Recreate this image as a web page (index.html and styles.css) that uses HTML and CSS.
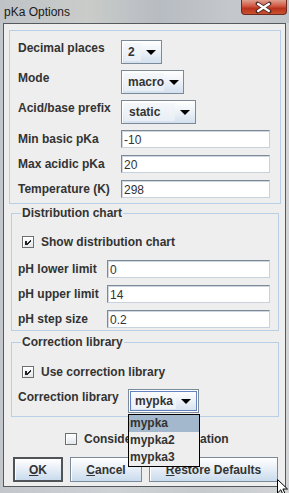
FILE: index.html
```html
<!DOCTYPE html>
<html lang="en">
<head>
  <meta charset="UTF-8" />
  <title>pKa Options</title>
  <link rel="stylesheet" href="styles.css">
</head>
<body>
  <div class="titlebar">
    <span class="title">pKa Options</span>
    <div class="close-btn">
      <svg width="46" height="15" viewBox="0 0 46 15">
        <path d="M17 3.5 L29 11.5 M29 3.5 L17 11.5" stroke="#4a2a26" stroke-width="4.2" stroke-linecap="round" />
        <path d="M17.5 4 L28.5 11 M28.5 4 L17.5 11" stroke="#fff" stroke-width="2.4" stroke-linecap="round" />
      </svg>
    </div>
  </div>

  <div class="window">
    <div class="group main">
      <span class="label up">Decimal places</span>
      <div class="combo w-dec"><span class="combo-text">2</span><span class="arrow"></span></div>

      <span class="label up">Mode</span>
      <div class="combo w-mode"><span class="combo-text">macro</span><span class="arrow"></span></div>

      <span class="label up">Acid/base prefix</span>
      <div class="combo w-prefix"><span class="combo-text">static</span><span class="arrow"></span></div>

      <span class="label">Min basic pKa</span>
      <div class="field">-10</div>

      <span class="label">Max acidic pKa</span>
      <div class="field">20</div>

      <span class="label">Temperature (K)</span>
      <div class="field">298</div>
    </div>

    <fieldset class="group titled dist">
      <legend>Distribution chart</legend>
      <label class="check-row">
        <span class="checkbox checked">
          <svg width="10" height="10" viewBox="0 0 10 10" shape-rendering="crispEdges">
            <rect x="2" y="4" width="2" height="4" fill="#222" />
            <path d="M4 7 L8 3 M4 8 L8 4" stroke="#222" stroke-width="1" />
          </svg>
        </span>
        Show distribution chart
      </label>
      <div class="form-grid ph">
        <span class="label">pH lower limit</span>
        <div class="field">0</div>
        <span class="label">pH upper limit</span>
        <div class="field">14</div>
        <span class="label">pH step size</span>
        <div class="field">0.2</div>
      </div>
    </fieldset>

    <fieldset class="group titled corr">
      <legend>Correction library</legend>
      <label class="check-row">
        <span class="checkbox checked">
          <svg width="10" height="10" viewBox="0 0 10 10" shape-rendering="crispEdges">
            <rect x="2" y="4" width="2" height="4" fill="#222" />
            <path d="M4 7 L8 3 M4 8 L8 4" stroke="#222" stroke-width="1" />
          </svg>
        </span>
        Use correction library
      </label>
      <div class="lib-row">
        <span class="label up">Correction library</span>
        <div class="combo w-lib focused">
          <span class="combo-text">mypka</span><span class="arrow"></span>
          <ul class="popup">
            <li class="selected">mypka</li>
            <li>mypka2</li>
            <li>mypka3</li>
          </ul>
        </div>
      </div>
    </fieldset>

    <label class="check-row consider">
      <span class="checkbox"></span>
      Consider tautomerization
    </label>

    <div class="buttons">
      <button class="btn default w-ok"><u>O</u>K</button>
      <button class="btn w-cancel"><u>C</u>ancel</button>
      <button class="btn w-restore"><u>R</u>estore Defaults</button>
    </div>
  </div>

  <svg class="cursor" width="12" height="16" viewBox="0 0 12 16">
    <path d="M0.5 0.5 L0.5 14 L3.8 10.8 L6 15.5 L8 14.6 L5.9 10 L10.5 10 Z" fill="#fff" stroke="#000" stroke-width="1" />
  </svg>
</body>
</html>
```

FILE: styles.css
```css
* {
  box-sizing: border-box;
}

body {
  margin: 0;
  width: 289px;
  height: 493px;
  overflow: hidden;
  position: relative;
  background: linear-gradient(90deg, #c3c7cb 0%, #cfd2d5 40%, #c6cacd 70%, #d2d4d6 100%);
  font-family: "Liberation Sans", Arial, sans-serif;
  font-size: 12px;
  color: #333;
}

.titlebar {
  height: 23px;
  display: flex;
  align-items: flex-start;
  background: linear-gradient(90deg, #bfc3c7 0%, #c9ccc9 30%, #b7bcc2 55%, #c4c8cc 80%, #bfc4c9 100%);
}

.title {
  padding: 5px 0 0 4px;
  font-size: 12px;
  color: #1a1a1a;
}

.close-btn {
  margin-left: auto;
  margin-right: 2px;
  width: 46px;
  height: 15px;
  border: 1px solid #6e2a20;
  border-top: none;
  border-radius: 0 0 4px 4px;
  background: linear-gradient(#e0a090 0%, #d0553e 45%, #b8321e 60%, #c9522e 100%);
  display: flex;
  align-items: center;
  justify-content: center;
  overflow: hidden;
}

.close-btn svg {
  margin-left: -1px;
}

.window {
  margin: 0 3px;
  height: 464px;
  border: 1px solid #555a5f;
  background: #eeeeee;
  display: flex;
  flex-direction: column;
}

.group {
  border: 1px solid #b8cfe5;
}

.main {
  margin: 6px 4px 0 5px;
  padding: 9px 0 4px 8px;
  display: grid;
  grid-template-columns: 103px auto;
  grid-template-rows: 24px 24px 24px 19px 19px 19px;
  row-gap: 6px;
  align-items: start;
}

.label {
  font-weight: bold;
  color: #333;
  line-height: 18px;
  white-space: nowrap;
}

.label.up {
  line-height: 16px;
}

.combo {
  position: relative;
  height: 24px;
  border: 1px solid #7a8a99;
  box-shadow: inset 1px 1px 0 #fff;
  background: linear-gradient(#ffffff 0%, #eef3f8 45%, #d3e0ee 100%);
  display: flex;
  align-items: center;
  font-weight: bold;
  color: #333;
}

.combo-text {
  flex: 1;
  align-self: stretch;
  display: flex;
  align-items: center;
  padding-left: 4px;
  margin: 2px 0 2px 2px;
  background: linear-gradient(#f4f7fa, #e8eef5);
  line-height: 14px;
}

.arrow {
  width: 20px;
  display: flex;
  justify-content: center;
}

.arrow::before {
  content: "";
  border-left: 5px solid transparent;
  border-right: 5px solid transparent;
  border-top: 5px solid #000;
}

.w-dec { width: 41px; }
.w-mode { width: 63px; }
.w-prefix { width: 75px; }
.w-prefix .combo-text { padding-left: 5px; }
.w-lib { width: 71px; }

.field {
  width: 149px;
  height: 18px;
  border: 1px solid #7a8a99;
  border-right-color: #c8d2dc;
  border-bottom-color: #c8d2dc;
  box-shadow: inset 1px 1px 0 #cfd6dd;
  background: #fff;
  padding: 2px 0 0 2px;
  line-height: 14px;
  color: #333;
}

fieldset.titled {
  min-width: 0;
}

.titled legend {
  margin-left: 3px;
  padding: 0 1px;
  font-weight: bold;
  line-height: 14px;
  color: #333;
}

fieldset.dist {
  margin: 2px 6px 0 7px;
  padding: 0 0 2px 6px;
}

fieldset.corr {
  margin: 4px 6px 0 7px;
  padding: 0 0 3px 6px;
}

.check-row {
  display: flex;
  align-items: center;
  gap: 7px;
  font-weight: bold;
  color: #333;
  line-height: 14px;
}

.dist .check-row {
  margin: 15px 0 0 4px;
}

.corr .check-row {
  margin: 16px 0 0 4px;
}

.checkbox {
  width: 12px;
  height: 12px;
  border: 1px solid #6f6f6f;
  box-shadow: inset 1px 1px 0 #fff;
  background: linear-gradient(#ffffff, #e2e7ec);
  display: flex;
  align-items: center;
  justify-content: center;
}

.form-grid.ph {
  margin-top: 11px;
  display: grid;
  grid-template-columns: 89px 163px;
  grid-auto-rows: 18px;
  row-gap: 7px;
  align-items: center;
}

.ph .field {
  width: 163px;
}

.lib-row {
  margin-top: 10px;
  display: grid;
  grid-template-columns: 110px auto;
  align-items: start;
}

.combo.focused {
  box-shadow: inset 0 0 0 1px #fff, inset 0 0 0 2px #6382bf;
}

.focused .combo-text {
  margin: 3px 0 3px 3px;
  padding-left: 3px;
  background: linear-gradient(#f7f9fb, #edf2f7);
}

.focused .arrow {
  margin-right: 2px;
}

.popup {
  position: absolute;
  top: 24px;
  left: -1px;
  width: 72px;
  margin: 0;
  padding: 0;
  list-style: none;
  background: #eeeeee;
  border: 1px solid #000;
  z-index: 5;
}

.popup li {
  height: 17px;
  line-height: 17px;
  padding-left: 1px;
  font-weight: bold;
  color: #333;
}

.popup li.selected {
  background: #a3b8cc;
}

.consider {
  margin: 15px 0 0 61px;
}

.buttons {
  margin: 11px 0 0 9px;
  display: flex;
  gap: 7px;
}

.btn {
  height: 25px;
  border: 1px solid #7a8a99;
  box-shadow: inset 1px 1px 0 #fff;
  background: linear-gradient(#ffffff 0%, #eef3f9 35%, #c9dbed 100%);
  font-family: "Liberation Sans", Arial, sans-serif;
  font-size: 12px;
  font-weight: bold;
  color: #333;
  padding: 0;
}

.btn.default {
  border: 2px solid #4f5458;
}

.w-ok { width: 50px; }
.w-cancel { width: 72px; }
.w-restore { width: 129px; }

.cursor {
  position: absolute;
  left: 277px;
  top: 479px;
}
```
